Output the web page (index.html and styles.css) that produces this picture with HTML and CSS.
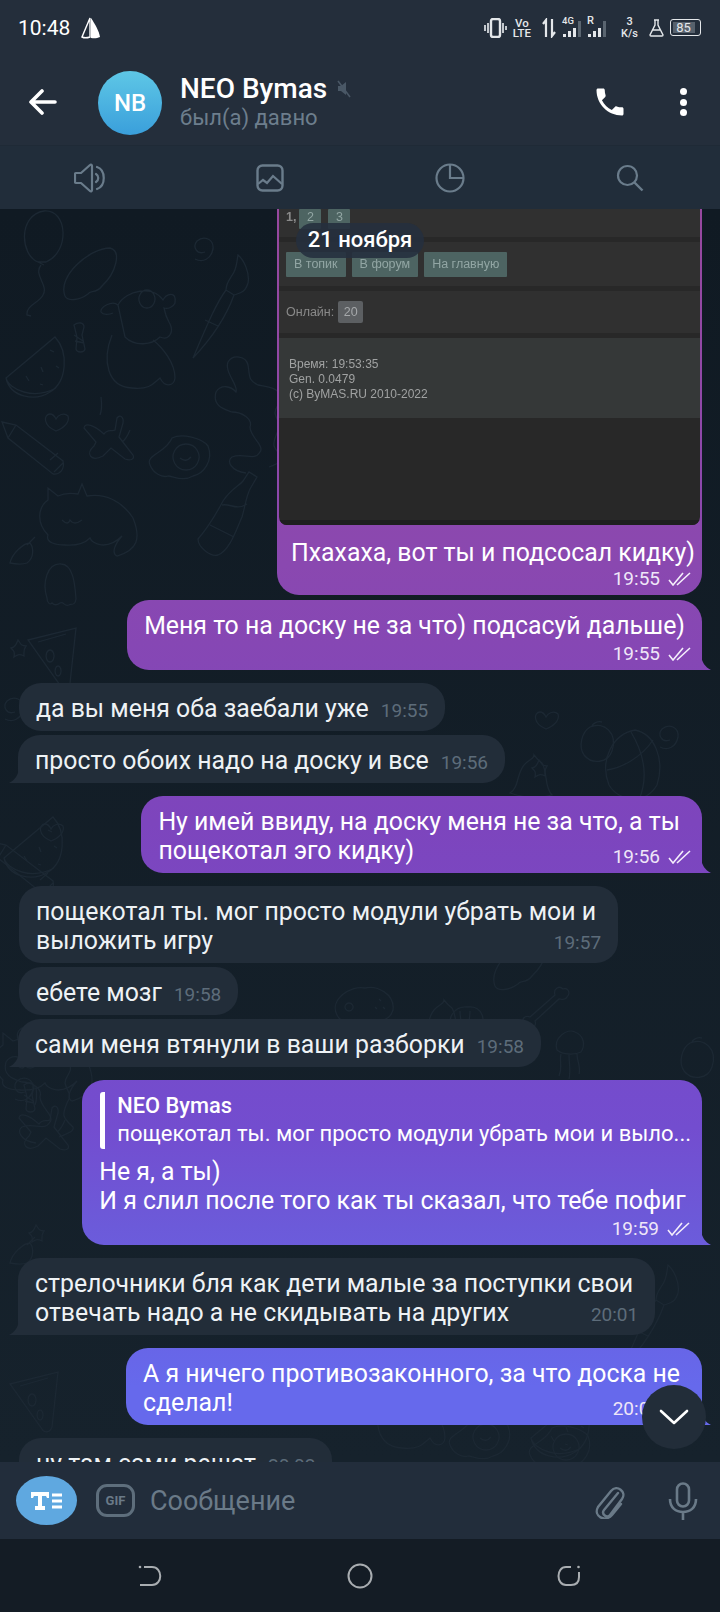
FILE: index.html
```html
<!DOCTYPE html>
<html lang="ru">
<head>
    <meta charset="UTF-8">
    <meta name="viewport" content="width=device-width, initial-scale=1.0">
    <title>NEO Bymas</title>
    <link rel="stylesheet" href="styles.css">
</head>
<body>
<div class="screen">
    <!-- status bar -->
    <div class="status">
        <div class="status-left">
            <span class="clock">10:48</span>
            <svg class="sail" width="20" height="22" viewBox="0 0 20 22"><path d="M9 1 1 20c2 1 5 1 8 0z" fill="none" stroke="#fff" stroke-width="1.400"/><path d="M10 1c4 6 8 13 9 19-3 1.500-6 1.500-9 1z" fill="#fff"/></svg>
        </div>
        <div class="status-right">
            <svg width="23" height="20" viewBox="0 0 23 20"><rect x="7" y="1" width="9" height="18" rx="2" fill="none" stroke="#e4e7ea" stroke-width="2.400"/><path d="M1 7v6M4 5v10M19 5v10M22 8v4" stroke="#c3c8cd" stroke-width="2"/></svg>
            <span class="stack"><b>Vo</b><b>LTE</b></span>
            <svg class="updown" width="14" height="20" viewBox="0 0 14 20"><path d="M4 19V3M1 6l3-4v17M10 1v17l3-4" fill="none" stroke="#e4e7ea" stroke-width="2.200"/></svg>
            <span class="signal"><b>4G</b><i class="bars"><u class="b1"></u><u class="b2"></u><u class="b3"></u><u class="b4"></u></i></span>
            <span class="signal signal-r"><b>R</b><i class="bars"><u class="b1"></u><u class="b2"></u><u class="b3"></u><u class="b4"></u></i></span>
            <span class="stack speed"><b>3</b><b>K/s</b></span>
            <svg width="15" height="18" viewBox="0 0 15 18"><path d="M5 1h5M6 1v5L1 16q0 1 1 1h11q1 0 1-1L9 6V1M4 11h7" fill="none" stroke="#e4e7ea" stroke-width="1.400"/></svg>
            <span class="battery"><span class="battery-level">85</span></span>
        </div>
    </div>

    <!-- chat header -->
    <header class="appbar">
        <svg class="back" width="28" height="26" viewBox="0 0 28 26"><path d="M26 13H3M13 2 2 13l11 11" fill="none" stroke="#fff" stroke-width="3.600" stroke-linecap="round" stroke-linejoin="round"/></svg>
        <div class="avatar">NB</div>
        <div class="peer">
            <div class="peer-name">NEO Bymas
                <svg class="mute" width="16" height="18" viewBox="0 0 16 18"><path d="M2 6h3l5-4v13l-5-4H2z" fill="#4a5866"/><path d="M2 1l12 16" stroke="#4a5866" stroke-width="1.600"/></svg>
            </div>
            <div class="peer-status">был(а) давно</div>
        </div>
        <svg class="call" width="36" height="36" viewBox="0 0 24 24"><path d="M6.620 10.790c1.440 2.830 3.760 5.140 6.590 6.590l2.200-2.200c.27-.27.67-.36 1.020-.24 1.120.37 2.330.57 3.570.57.55 0 1 .45 1 1V20c0 .55-.45 1-1 1-9.390 0-17-7.610-17-17 0-.55.45-1 1-1h3.500c.55 0 1 .45 1 1 0 1.250.2 2.450.57 3.570.11.35.03.74-.25 1.020z" fill="#fff"/></svg>
        <div class="dots"><span></span><span></span><span></span></div>
    </header>

    <!-- pinned tabs -->
    <nav class="tabs">
        <svg width="32" height="30" viewBox="0 0 32 30"><path d="M2 10h5l9-8c1-1 2 0 2 1v24c0 1-1 2-2 1l-9-8H2q-1 0-1-1v-8q0-1 1-1zM22 11c3 2 3 6 0 8M23 4c9 3 9 19 0 22" fill="none" stroke="#6a7c8b" stroke-width="2.200" stroke-linejoin="round" stroke-linecap="round"/></svg>
        <svg width="28" height="28" viewBox="0 0 28 28"><rect x="1.500" y="1.500" width="25" height="25" rx="5" fill="none" stroke="#6a7c8b" stroke-width="2.400"/><path d="M2 20l5-4 4 3 6-7 9 8" fill="none" stroke="#6a7c8b" stroke-width="2.200"/></svg>
        <svg width="30" height="30" viewBox="0 0 30 30"><circle cx="15" cy="15" r="13.500" fill="none" stroke="#6a7c8b" stroke-width="2.200"/><path d="M15 2v13h13" fill="none" stroke="#6a7c8b" stroke-width="2.200"/></svg>
        <svg width="28" height="28" viewBox="0 0 28 28"><circle cx="11.500" cy="11.500" r="9.500" fill="none" stroke="#6a7c8b" stroke-width="2.200"/><path d="M18.500 18.500l8 8" stroke="#6a7c8b" stroke-width="2.400"/></svg>
    </nav>

    <main class="chat">
        <!-- wallpaper doodles -->
        <svg class="wallpaper" width="720" height="1253" viewBox="0 209 720 1253">
            <defs>
                <path id="balloon" d="M38 262C20 255 18 215 44 211 68 209 70 252 46 262zM38 262l6 3M41 265c-8 10 8 20 2 30-4 8-17 10-16 20l4 1"/>
                <path id="pickle" d="M65 296c-8-20 25-48 45-48 12 3 6 25-8 38-6 8-12 4-14 8-8 6-20 8-23 2z"/>
                <path id="dog" d="M118 305c8-15 35-20 45-5 3-6 14-10 12 3-2 5-8 6-11 5 2 10 4 12 6 16 4 8-1 17-10 13-8 8-25 10-35 0zM118 305c-6-5-18 2-17 7 2 3 8 3 12 1M112 335c-10 25-5 52 20 53 18 2 22-5 28-10 5 10 14 8 15 0 0-15-12-30-22-38M147 308a8 9 0 1 0-.1 0z"/>
                <path id="brush" d="M193 358c12-28 22-53 33-68l8 5c-9 25-24 45-41 63zM226 290c0-8 5-12 8-18 3-6 3-12 4-17 6 5 12 18 10 28-3 10-8 10-14 12M205 320l13 6"/>
                <path id="candy" d="M74 325c4-3 10-3 10 2l-2 8 3 14c-1 4-8 4-9 0l1-12zM74 335l9 6M75 341l9 2"/>
                <path id="melon" d="M6 378 55 337c14 15 12 45-5 55-15 10-40 5-44-14zM6 378c3 12 28 22 50 10M26 376l3 5M41 367l2 5M56 366l3 2M50 350l4 2M40 384l3 1"/>
                <path id="pencil" d="M2 422l14 3 47 36c2 8-3 14-10 13L8 438zM8 438l8-13M50 460l8-7M54 472l9-9"/>
                <path id="heart" d="M56 431c-14-6-12-17-6-17 3 0 5 3 6 5 2-4 8-7 12-3 2 6-4 12-12 15z"/>
                <path id="plane" d="M103 456c-12 6-18-2-9-10l2-4-12-14c1-6 10-3 20 6 4-6 8-2 11-4l2-12c3-4 7-1 6 5l-4 14 14 18c2 4-2 6-8 4l-14-11zM100 415c2-5 2-10 1-18M130 430c-2 5-5 10-8 12"/>
                <path id="egg" d="M150 465c-5-10 16-12 22-27 10-5 30 0 36 8 6 15-5 28-15 30-10 6-20 0-25 0-6 2-15-3-18-11zM186 444a13 13 0 1 0 .1 0zM180 458q6 5 11-1"/>
                <path id="bottle" d="M257 477l-8-5-6 9c-3 4-12 8-20 20-8 15-18 30-25 38 0 8 12 18 20 16 12-5 18-25 24-38 3-10 4-20 8-28zM222 505c8-2 14 6 25-1M210 525l24 12"/>
                <path id="squiggle" d="M246 473c-15-2-20-12-14-16 12-5 22 5 28-5 5-6-10-15-10-25 3-8-8-15-18-15-8-3-20-6-16-20 5-8 15-6 20 0 3-6-12-20-8-30 5-8 18-6 20 3 2 12 0 15 10 20 10 2 20 3 22 10 3 8-5 10-5 18 2 10 8 10 2 20-5 12-5 14 6 24 2 5-10 8-14 10"/>
                <path id="cat" d="M48 535c-12-12-10-28 0-35l0-12 10 8c6-3 14-3 20-2l4-10 5 12c18-3 35 5 46 22 8 20 5 32-16 38-6-3-2-12 5-20-15 15-30 8-32 2-5 5-12 8-25 7-8 0-20-2-17-10zM62 520q6 6 8 0 4 6 12 0"/>
                <path id="ghost" d="M47 598c-5-15 0-35 14-34 12 0 14 20 15 35-1 8-6 4-7 6-5 2-5-4-9-2-4 3-6 2-8 0-2 2-5 0-5-5z"/>
                <path id="leaf" d="M10 563c2-10 14-20 20-20 4 5 4 15-3 20-6 2-12 1-17 0zM27 545l8-8"/>
                <path id="swirl" d="M205 252c-8 3-13-5-8-11 7-6 17-2 16 8-2 10-10 14-18 10"/>
                <path id="star" d="M4 0c3 4 3 6 8 6-3 4-2 6-2 10-4-2-6-2-10 1 1-5 0-6-3-9 4-1 5-3 7-8z"/>
                <path id="peach" d="M10 3c14-6 28 6 22 24-4 12-20 14-28 4C-2 22 2 8 10 3zM12 3c0-4 6-6 10-5"/>
                <path id="pizza" d="M0 12 48 0 42 55c-2 6-8 6-10 2zM10 14l28-8M22 22a4 6 0 1 0 .1 0zM30 38a3 5 0 1 0 .1 0z"/>
                <path id="bone" d="M0 40c-5-6 0-10 5-8L30 10c-2-6 4-10 8-6 5-2 8 4 4 8-2 4-6 2-8 2L10 36c2 6-4 10-10 4z"/>
                <path id="shell" d="M4 30C-6 15 4 0 18 2c14-2 20 14 10 26-8 4-18 6-24 2zM10 6c0 8 2 16 4 24M20 6c0 8-2 16-4 24"/>
                <path id="pad" d="M2 30C-6 15 15 0 30 3c12-3 30 6 28 22-4 14-18 10-30 12-10 1-22 2-26-7zM14 18a4 4 0 1 0 .1 0zM44 14l2 2M40 22l2 2M48 22l2 2"/>
                <path id="jelly" d="M4 20C0 8 14-2 22 2c10 4 10 14 6 20-6 3-18 3-24-2zM8 24c-2 8 2 12-2 22M16 25c0 8 2 16 0 24M24 24c0 8 4 12 2 20"/>
                <path id="bell" d="M0 38c10-6 6-22 16-30 4-4 8-4 8-8 3 4 5 6 8 8 6 10 2 24 10 32-14 4-30 2-42-2z"/>
                <path id="ball" d="M30 0C50 4 60 30 52 55 40 75 14 72 4 55-6 30 8 4 30 0zM26 2c12 20 18 44 8 68M2 40c14-2 34-12 46-30"/>
            </defs>
            <g class="doodles">
                <use href="#balloon"/><use href="#pickle"/><use href="#dog"/><use href="#brush"/><use href="#candy"/><use href="#melon"/>
                <use href="#pencil"/><use href="#heart"/><use href="#plane"/><use href="#egg"/><use href="#bottle"/><use href="#squiggle"/>
                <use href="#cat"/><use href="#ghost"/><use href="#leaf"/><use href="#swirl"/>
                <use href="#pizza" x="28" y="628"/><use href="#swirl" x="-190" y="460"/><use href="#star" x="14" y="640"/>
                <use href="#heart" x="490" y="298"/><use href="#peach" x="580" y="724"/><use href="#swirl" x="465" y="488"/><use href="#star" x="535" y="760"/>
                <use href="#bell" x="510" y="755"/><use href="#ball" x="605" y="730"/><use href="#pencil" x="-10" y="420"/><use href="#melon" x="-2" y="480"/>
                <use href="#heart" x="-5" y="410"/><use href="#pad" x="335" y="985"/><use href="#shell" x="450" y="1005"/><use href="#bone" x="525" y="985"/>
                <use href="#jelly" x="553" y="1030"/><use href="#squiggle" x="-210" y="670"/><use href="#cat" x="-45" y="545"/><use href="#swirl" x="-180" y="840"/>
                <use href="#star" x="32" y="1225"/><use href="#leaf" x="0" y="700"/><use href="#plane" x="-65" y="690"/><use href="#pizza" x="10" y="1372"/>
                <use href="#candy" x="-50" y="760"/><use href="#egg" x="300" y="980"/><use href="#brush" x="430" y="1010"/><use href="#dog" x="270" y="1060"/>
                <use href="#balloon" x="620" y="870"/><use href="#bottle" x="430" y="1020"/><use href="#egg" x="380" y="990"/><use href="#melon" x="525" y="1060"/>
                <use href="#pickle" x="430" y="690"/><use href="#bell" x="420" y="1000"/><use href="#peach" x="680" y="1040"/>
            </g>
        </svg>

        <div class="msg out shot-msg">
            <div class="shot">
                <div class="shot-row shot-pages"><span class="shot-label">1,</span><span class="shot-btn">2</span><span class="shot-btn">3</span></div>
                <div class="shot-row shot-links"><span class="shot-btn">В топик</span><span class="shot-btn">В форум</span><span class="shot-btn">На главную</span></div>
                <div class="shot-row shot-online"><span class="shot-label">Онлайн:</span><span class="shot-count">20</span></div>
                <div class="shot-row shot-foot">Время: 19:53:35<br>Gen. 0.0479<br>(c) ByMAS.RU 2010-2022</div>
                <div class="shot-empty"></div>
            </div>
            <div class="shot-caption">
                <p>Пхахаха, вот ты и подсосал кидку)</p>
                <div class="meta-row"><span class="time">19:55</span><svg class="checks" width="24" height="14" viewBox="0 0 24 14"><use href="#ticks"/></svg></div>
            </div>
        </div>

        <div class="msg out tail near">
            <p>Меня то на доску не за что) подсасуй дальше)</p>
            <div class="meta-row"><span class="time">19:55</span><svg class="checks" width="24" height="14" viewBox="0 0 24 14"><use href="#ticks"/></svg></div>
        </div>

        <div class="msg in">
            <div class="last"><span>да вы меня оба заебали уже</span><span class="time">19:55</span></div>
        </div>
        <div class="msg in tail same">
            <div class="last"><span>просто обоих надо на доску и все</span><span class="time">19:56</span></div>
        </div>

        <div class="msg out tail wrapped">
            <p>Ну имей ввиду, на доску меня не за что, а ты</p>
            <div class="last"><span>пощекотал эго кидку)</span><span class="meta"><span class="time">19:56</span><svg class="checks" width="24" height="14" viewBox="0 0 24 14"><use href="#ticks"/></svg></span></div>
        </div>

        <div class="msg in wrapped">
            <p>пощекотал ты. мог просто модули убрать мои и</p>
            <div class="last"><span>выложить игру</span><span class="time">19:57</span></div>
        </div>
        <div class="msg in same">
            <div class="last"><span>ебете мозг</span><span class="time">19:58</span></div>
        </div>
        <div class="msg in tail same">
            <div class="last"><span>сами меня втянули в ваши разборки</span><span class="time">19:58</span></div>
        </div>

        <div class="msg out tail reply-msg">
            <div class="reply">
                <div class="reply-name">NEO Bymas</div>
                <div class="reply-text">пощекотал ты. мог просто модули убрать мои и выло...</div>
            </div>
            <p>Не я, а ты)</p>
            <p>И я слил после того как ты сказал, что тебе пофиг</p>
            <div class="meta-row"><span class="time">19:59</span><svg class="checks" width="24" height="14" viewBox="0 0 24 14"><use href="#ticks"/></svg></div>
        </div>

        <div class="msg in tail wrapped">
            <p>стрелочники бля как дети малые за поступки свои</p>
            <div class="last"><span>отвечать надо а не скидывать на других</span><span class="time">20:01</span></div>
        </div>

        <div class="msg out tail wrapped">
            <p>А я ничего противозаконного, за что доска не</p>
            <div class="last"><span>сделал!</span><span class="meta"><span class="time">20:01</span><svg class="checks" width="24" height="14" viewBox="0 0 24 14"><use href="#ticks"/></svg></span></div>
        </div>

        <div class="msg in">
            <div class="last"><span>ну там сами решат</span><span class="time">20:02</span></div>
        </div>

        <!-- sticky date and scroll button float over the messages -->
        <div class="date-pill">21 ноября</div>
        <div class="scroll-down">
            <svg width="30" height="16" viewBox="0 0 30 16"><path d="M2 2l13 12L28 2" fill="none" stroke="#fff" stroke-width="2.600" stroke-linecap="round" stroke-linejoin="round"/></svg>
        </div>

        <svg class="ticks-defs" width="0" height="0"><defs><g id="ticks"><path d="M1 8l4 5L15 1M9 13 22 1M6 13" fill="none" stroke="#f4eefb" stroke-width="1.600"/></g></defs></svg>
    </main>

    <!-- input bar -->
    <div class="composer">
        <div class="format-btn">
            <svg width="32" height="18" viewBox="0 0 32 18"><path d="M0 0h18v6h-2l-1-2h-4v10h3v4H4v-4h3V4H3L2 6H0z" fill="#fff"/><path d="M21 3h10M21 9h10M21 15h10" stroke="#fff" stroke-width="3"/></svg>
        </div>
        <div class="gif-btn">GIF</div>
        <div class="placeholder">Сообщение</div>
        <svg class="clip" width="32" height="36" viewBox="0 0 32 36"><path d="M24 10 10 27c-3 4 3 9 6 5L28 16c5-7-5-15-11-8L4 24c-5 9 7 16 14 8l9-11" fill="none" stroke="#6a7a88" stroke-width="2.400" stroke-linecap="round"/></svg>
        <svg class="mic" width="30" height="38" viewBox="0 0 30 38"><rect x="9" y="1.500" width="12" height="23" rx="6" fill="none" stroke="#6a7a88" stroke-width="2.600"/><path d="M2 17c0 9 6 13 13 13s13-4 13-13M15 30v8" fill="none" stroke="#6a7a88" stroke-width="2.600"/></svg>
    </div>

    <!-- android nav -->
    <div class="navbar">
        <svg width="24" height="24" viewBox="0 0 24 24"><path d="M6 3h8c11 0 11 18 0 18H2" fill="none" stroke="#a9adb1" stroke-width="2"/><circle cx="2" cy="3" r="1.300" fill="#a9adb1"/></svg>
        <svg width="26" height="26" viewBox="0 0 26 26"><circle cx="13" cy="13" r="11.500" fill="none" stroke="#a9adb1" stroke-width="2"/></svg>
        <svg width="24" height="24" viewBox="0 0 24 24"><path d="M14 3H9C-1 3-1 21 9 21h5q8 0 8-8V8" fill="none" stroke="#a9adb1" stroke-width="2"/><circle cx="21.500" cy="3" r="1.300" fill="#a9adb1"/></svg>
    </div>
</div>
</body>
</html>
```

FILE: styles.css
```css
* {
    box-sizing: border-box;
}
body {
    margin: 0;
    font-family: Roboto, "Noto Sans", sans-serif;
    background-color: #141c25;
    color: #fff;
}
p {
    margin: 0;
}
.screen {
    width: 720px;
    height: 1612px;
    display: flex;
    flex-direction: column;
    overflow: hidden;
}

/* status bar */
.status {
    height: 55px;
    background-color: #242e3b;
    display: flex;
    justify-content: space-between;
    align-items: center;
    padding: 0 19px 0 18px;
}
.status-left {
    display: flex;
    align-items: center;
    gap: 11px;
}
.clock {
    font-size: 21px;
}
.status-right {
    display: flex;
    align-items: center;
    gap: 6px;
    color: #e4e7ea;
}
.stack {
    display: flex;
    flex-direction: column;
    align-items: center;
    font-size: 11.500px;
    line-height: 10px;
}
.updown {
    margin-left: 5px;
}
.speed {
    font-size: 11px;
    margin: 0 5px 0 7px;
    line-height: 12px;
}
.stack b, .signal b {
    font-weight: 500;
}
.signal {
    display: flex;
    flex-direction: column;
    width: 21px;
    font-size: 9.500px;
    line-height: 9px;
    margin-top: -2px;
}
.signal-r {
    margin-left: -2px;
    font-size: 11px;
    padding-left: 0;
}
.bars {
    display: flex;
    align-items: flex-end;
    gap: 2px;
    height: 12px;
    margin-left: 1px;
}
.bars u {
    display: block;
    flex: none;
    width: 3px;
    background-color: #e4e7ea;
}
.bars .b1 { height: 3px; }
.bars .b2 { height: 6px; }
.bars .b3 { height: 9px; }
.bars .b4 { height: 16px; background-color: #5a6570; margin-top: -6px; }
.battery {
    width: 31px;
    height: 17px;
    border: 1.500px solid #e4e7ea;
    border-radius: 3px;
    padding: 1.500px;
    display: block;
    font-size: 13px;
    line-height: 11px;
}
.battery-level {
    display: block;
    width: 85%;
    height: 11px;
    background-color: #57616c;
    text-align: center;
    white-space: nowrap;
}

/* header */
.appbar {
    height: 90px;
    background-color: #242e3b;
    display: flex;
    align-items: center;
    padding: 0 33px 0 29px;
}
.back {
    margin-top: 4px;
}
.avatar {
    width: 64px;
    height: 64px;
    margin: 5px 0 0 41px;
    border-radius: 50%;
    background: linear-gradient(180deg, #5ec7e6, #3a9fdb);
    display: flex;
    align-items: center;
    justify-content: center;
    font-size: 24px;
    font-weight: 500;
}
.peer {
    flex: 1;
    margin: 4px 0 0 18px;
}
.peer-name {
    font-size: 28px;
    font-weight: 500;
    line-height: 32px;
    display: flex;
    align-items: center;
    gap: 9px;
}
.peer-status {
    font-size: 22px;
    line-height: 26px;
    color: #6d7e8d;
}
.call {
    margin: 4px 52px 0 0;
}
.dots {
    display: flex;
    flex-direction: column;
    gap: 3.500px;
    margin-top: 4px;
}
.dots span {
    width: 7px;
    height: 7px;
    border-radius: 50%;
    background-color: #fff;
}

/* tabs under the header */
.tabs {
    height: 64px;
    background-color: #212d3a;
    border-top: 1px solid #1f2a36;
    display: grid;
    grid-template-columns: repeat(4, 1fr);
    align-items: center;
    justify-items: center;
}

/* messages */
.chat {
    flex: 1;
    min-height: 0;
    position: relative;
    overflow: hidden;
    background: linear-gradient(180deg, #101a23, #16222c);
    display: flex;
    flex-direction: column;
    padding: 0 18px 0 19px;
    font-size: 24.850px;
    line-height: 29px;
}
.wallpaper {
    position: absolute;
    left: 0;
    top: 0;
}
.doodles {
    fill: none;
    stroke: #1c2833;
    stroke-width: 1.300;
}
.msg {
    position: relative;
    flex: none;
    margin-top: 13px;
    padding: 11px 17px 8px;
    border-radius: 22px;
    white-space: nowrap;
}
.same {
    margin-top: 4px;
}
.near {
    margin-top: 5px;
}
.in {
    align-self: flex-start;
    background-color: #222d39;
    color: #eef2f5;
}
.out {
    align-self: flex-end;
    background: linear-gradient(180deg, #97489f 13%, #8a48b0 35%, #7d45bd 51%, #734dcf 70%, #6c5ad9 76%, #6669ec 86%) fixed;
}
.time {
    font-size: 19px;
    line-height: 17px;
}
.in .time {
    color: #5d6c7a;
    margin-top: 8px;
}
.out .time {
    color: #efe6f8;
}
.last {
    display: flex;
    justify-content: space-between;
    gap: 12px;
}
.wrapped {
    padding-right: 22px;
}
.wrapped .last {
    margin-right: -5px;
}
.meta-row, .meta {
    display: flex;
    justify-content: flex-end;
    align-items: center;
    gap: 8px;
    margin-right: -7px;
}
.meta-row {
    height: 22px;
    padding-top: 5px;
}
.meta {
    height: 17px;
    margin-top: 12px;
}

/* bubble tails */
.tail.out {
    border-bottom-right-radius: 0;
}
.tail.in {
    border-bottom-left-radius: 0;
    margin-left: -1px;
}
.tail::after {
    content: "";
    position: absolute;
    bottom: 0;
    width: 10px;
    height: 14px;
    background: inherit;
}
.tail.out::after {
    right: -9px;
    clip-path: path("M0 0C1 6 4 11 10 14H0Z");
}
.tail.in::after {
    left: -9px;
    clip-path: path("M10 0C9 6 6 11 0 14H10Z");
}

/* forwarded forum screenshot */
.shot-msg {
    margin-top: 0;
    width: 425px;
    padding: 0 2px;
    border-radius: 0 0 22px 22px;
}
.shot {
    height: 316px;
    background-color: #282828;
    border-radius: 0 0 8px 8px;
    overflow: hidden;
    display: flex;
    flex-direction: column;
    gap: 5px;
    font-family: "Liberation Sans", Arial, sans-serif;
    font-size: 12.500px;
    line-height: 16px;
    color: #92a6a4;
}
.shot-row {
    background-color: #303030;
    display: flex;
    align-items: center;
    gap: 6px;
    padding: 0 7px;
}
.shot-row > *, .shot-foot {
    filter: blur(0.4px);
}
.shot-pages {
    height: 28px;
    align-items: flex-start;
    gap: 0;
}
.shot-pages .shot-label {
    margin-right: 3px;
    font-weight: bold;
}
.shot-links {
    height: 44px;
}
.shot-links .shot-btn {
    padding: 4px 8px 5px;
    height: 25px;
}
.shot-pages .shot-btn {
    width: 22px;
    height: 20px;
    margin-right: 7px;
    text-align: center;
}
.shot-btn {
    background-color: #4d6462;
    border-radius: 1px;
}
.shot-label {
    color: #8a8a8a;
}
.shot-online {
    height: 42px;
    gap: 4px;
}
.shot-count {
    width: 25px;
    height: 22px;
    line-height: 22px;
    text-align: center;
    background-color: #5c5f62;
    color: #a5a8aa;
    border-radius: 2px;
}
.shot-foot {
    height: 80px;
    display: block;
    padding: 19px 10px 0;
    font-size: 12px;
    line-height: 15px;
    background-color: #353838;
    color: #a0a2a2;
}
.shot-empty {
    flex: 1;
    border-bottom: 5px solid #1f1f1f;
    margin-top: -5px;
}
.shot-caption {
    padding: 13px 6px 8px 12px;
}
.shot-caption .meta-row {
    margin-right: 2px;
    height: 20px;
    padding-top: 3px;
}

/* reply quote */
.reply-msg {
    padding-right: 11px;
}
.reply-msg .meta-row {
    margin-right: 0;
}
.reply {
    border-left: 5px solid #fff;
    border-radius: 3px;
    margin: 1px 0 8px 1px;
    padding-left: 12px;
    height: 57px;
    font-size: 22px;
    line-height: 28px;
}
.reply-name {
    font-weight: 500;
    font-size: 21.800px;
}

/* overlays */
.date-pill {
    position: absolute;
    left: 296px;
    top: 14px;
    width: 128px;
    height: 35px;
    border-radius: 18px;
    background-color: rgba(36, 47, 61, 0.88);
    font-size: 22px;
    font-weight: 500;
    line-height: 34px;
    text-align: center;
}
.scroll-down {
    position: absolute;
    left: 642px;
    top: 1176px;
    width: 64px;
    height: 64px;
    border-radius: 50%;
    background-color: #222d39;
    display: flex;
    align-items: center;
    justify-content: center;
}
.ticks-defs {
    position: absolute;
}

/* input bar */
.composer {
    height: 77px;
    background-color: #222d3b;
    display: flex;
    align-items: center;
    padding: 0 22px 0 16px;
}
.format-btn {
    width: 61px;
    height: 49px;
    border-radius: 50%;
    background-color: #5fa8e0;
    display: flex;
    align-items: center;
    justify-content: center;
}
.gif-btn {
    width: 39px;
    height: 33px;
    margin-left: 19px;
    border: 3px solid #5e6e7c;
    border-radius: 11px;
    color: #6a7a88;
    font-size: 13px;
    font-weight: 700;
    line-height: 27px;
    text-align: center;
}
.placeholder {
    flex: 1;
    margin-left: 15px;
    font-size: 27px;
    color: #6a7a88;
}
.mic {
    margin-left: 42px;
}

/* system navigation */
.navbar {
    height: 73px;
    background-color: #141c25;
    display: grid;
    grid-template-columns: 210px 210px 207px;
    justify-content: start;
    justify-items: center;
    align-items: center;
    padding: 0 0 0 45px;
}
```
